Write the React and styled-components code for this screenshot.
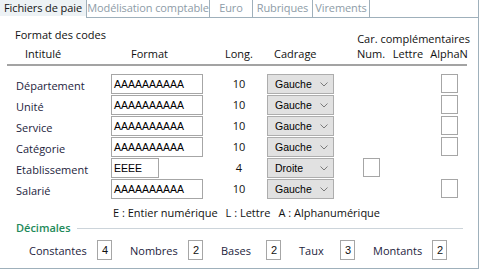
import React from 'react';
import styled, { createGlobalStyle } from 'styled-components';

const GlobalStyle = createGlobalStyle`
  html, body {
    margin: 0;
    padding: 0;
    background: #ffffff;
  }
  body {
    font-family: "Open Sans", "Noto Sans", sans-serif;
    font-size: 11px;
    color: #111;
  }
`;

const Frame = styled.div`
  width: 482px;
  height: 273px;
  overflow: hidden;
  background: #fff;
`;

const TabBar = styled.div`
  display: flex;
  height: 18px;
  width: 479px;
`;

const Tab = styled.div`
  box-sizing: border-box;
  width: ${({ width }) => width}px;
  height: 18px;
  line-height: 16px;
  text-align: center;
  white-space: nowrap;
  letter-spacing: -0.1px;
  background: ${({ active }) => (active ? '#edf2f5' : '#fff')};
  color: ${({ active }) => (active ? '#141414' : '#8e9ca7')};
  border-bottom: ${({ active }) => (active ? '2px solid #fff' : '1px solid #9fb0bb')};
  border-right: ${({ active }) => (active ? 'none' : '1px solid #9fb0bb')};
  border-left: ${({ first }) => (first ? '1px solid #9fb0bb' : 'none')};
`;

const TabFill = styled.div`
  flex: 1;
  border-bottom: 1px solid #9fb0bb;
  border-right: 1px solid #9fb0bb;
  box-sizing: border-box;
`;

const Panel = styled.div`
  box-sizing: border-box;
  width: 479px;
  height: 251px;
  padding-top: 9px;
  border-right: 1px solid #9fb0bb;
  border-bottom: 1px solid #9fb0bb;
`;

const CodeGrid = styled.div`
  display: grid;
  grid-template-columns: 95px 100px 56px 67px 18px 38px 36px 46px;
  margin-left: 16px;
  line-height: 15px;
`;

const SectionTitle = styled.div`
  grid-column: 1 / 4;
  height: 19px;
  margin-left: -1px;
  color: #111;
`;

const ExtraTitle = styled.div`
  grid-column: 6 / 9;
  align-self: end;
  text-align: right;
  padding-right: 2px;
  white-space: nowrap;
`;

const ColHead = styled.div`
  grid-column: ${({ col }) => col};
  text-align: ${({ center }) => (center ? 'center' : 'left')};
  padding-left: ${({ indent }) => indent || 0}px;
  white-space: nowrap;
`;

const Rule = styled.div`
  height: 2px;
  background: #a3a3a3;
  margin: 3px 11px 8px 7px;
`;

const Rows = styled(CodeGrid)`
  grid-auto-rows: 21px;
`;

const RowLabel = styled.div`
  grid-column: 1;
  padding-top: 4px;
  color: #1d1d3d;
  white-space: nowrap;
`;

const CodeInput = styled.div`
  grid-column: 2;
  box-sizing: border-box;
  width: ${({ width }) => width}px;
  height: 20px;
  border: 1px solid #a6a6a6;
  padding-left: 2px;
  font-family: "Liberation Sans", Arial, sans-serif;
  font-size: 10.5px;
  line-height: 18px;
  color: #000;
`;

const Length = styled.div`
  grid-column: 3;
  text-align: center;
  line-height: 20px;
  color: #111;
`;

const Select = styled.div`
  grid-column: 4;
  box-sizing: border-box;
  height: 20px;
  display: flex;
  align-items: center;
  justify-content: space-between;
  padding: 0 5px 0 7px;
  background: #e1e1e1;
  border: 1px solid #adadad;
  font-family: "Liberation Sans", Arial, sans-serif;
  font-size: 10.5px;
  color: #000;
`;

const Check = styled.div`
  grid-column: ${({ col }) => col};
  justify-self: center;
  box-sizing: border-box;
  width: 17px;
  height: 19px;
  border: 1px solid #a6a6a6;
  background: #fff;
`;

const Legend = styled.div`
  display: flex;
  gap: 8px;
  padding-left: 113px;
  margin-top: 5px;
  line-height: 15px;
  color: #111;
`;

const GroupHead = styled.div`
  display: flex;
  align-items: center;
  gap: 6px;
  margin: 0 15px 0 16px;
  height: 15px;
  color: #1e8a5a;
  font-weight: 600;
`;

const GroupLine = styled.div`
  flex: 1;
  height: 1px;
  background: #ccd4da;
  margin-top: 1px;
`;

const DecimalRow = styled.div`
  display: flex;
  align-items: center;
  gap: 18px;
  padding-left: 29px;
  margin-top: 5px;
`;

const Field = styled.div`
  display: flex;
  align-items: center;
`;

const FieldLabel = styled.span`
  width: ${({ width }) => width}px;
  color: #1d1d3d;
  white-space: nowrap;
`;

const DigitBox = styled.div`
  box-sizing: border-box;
  width: 15px;
  height: 20px;
  border: 1px solid #a6a6a6;
  text-align: right;
  padding-right: 3px;
  line-height: 18px;
  font-family: "Liberation Sans", Arial, sans-serif;
  font-size: 11px;
  color: #111;
`;

const Chevron = () => (
  <svg width="8" height="5" viewBox="0 0 8 5">
    <path d="M0.5 0.5 L4 4 L7.5 0.5" fill="none" stroke="#7a7a7a" strokeWidth="1" />
  </svg>
);

const tabs = [
  { label: 'Fichiers de paie', width: 86, active: true },
  { label: 'Modélisation comptable', width: 124, first: true },
  { label: 'Euro', width: 43 },
  { label: 'Rubriques', width: 60 },
  { label: 'Virements', width: 57 },
];

const codes = [
  { label: 'Département', format: 'AAAAAAAAAA', len: 10, align: 'Gauche', alpha: true },
  { label: 'Unité', format: 'AAAAAAAAAA', len: 10, align: 'Gauche', alpha: true },
  { label: 'Service', format: 'AAAAAAAAAA', len: 10, align: 'Gauche', alpha: true },
  { label: 'Catégorie', format: 'AAAAAAAAAA', len: 10, align: 'Gauche', alpha: true },
  { label: 'Etablissement', format: 'EEEE', len: 4, align: 'Droite', num: true, short: true },
  { label: 'Salarié', format: 'AAAAAAAAAA', len: 10, align: 'Gauche', alpha: true },
];

const decimals = [
  { label: 'Constantes', value: 4, width: 68 },
  { label: 'Nombres', value: 2, width: 58 },
  { label: 'Bases', value: 2, width: 45 },
  { label: 'Taux', value: 3, width: 41 },
  { label: 'Montants', value: 2, width: 59 },
];

const App = () => (
  <Frame>
    <GlobalStyle />
    <TabBar>
      {tabs.map((t) => (
        <Tab key={t.label} width={t.width} active={t.active} first={t.first}>
          {t.label}
        </Tab>
      ))}
      <TabFill />
    </TabBar>
    <Panel>
      <CodeGrid>
        <SectionTitle>Format des codes</SectionTitle>
        <ExtraTitle>Car. complémentaires</ExtraTitle>
        <ColHead col={1} indent={9}>Intitulé</ColHead>
        <ColHead col={2} indent={20}>Format</ColHead>
        <ColHead col={3} center>Long.</ColHead>
        <ColHead col={4} indent={7}>Cadrage</ColHead>
        <ColHead col={6} center>Num.</ColHead>
        <ColHead col={7} center>Lettre</ColHead>
        <ColHead col={8} center>AlphaN</ColHead>
      </CodeGrid>
      <Rule />
      <Rows>
        {codes.map((c) => (
          <React.Fragment key={c.label}>
            <RowLabel>{c.label}</RowLabel>
            <CodeInput width={c.short ? 48 : 92}>{c.format}</CodeInput>
            <Length>{c.len}</Length>
            <Select>
              <span>{c.align}</span>
              <Chevron />
            </Select>
            {c.num && <Check col={6} />}
            {c.alpha && <Check col={8} />}
          </React.Fragment>
        ))}
      </Rows>
      <Legend>
        <span>E : Entier numérique</span>
        <span>L : Lettre</span>
        <span>A : Alphanumérique</span>
      </Legend>
      <GroupHead>
        Décimales
        <GroupLine />
      </GroupHead>
      <DecimalRow>
        {decimals.map((d) => (
          <Field key={d.label}>
            <FieldLabel width={d.width}>{d.label}</FieldLabel>
            <DigitBox>{d.value}</DigitBox>
          </Field>
        ))}
      </DecimalRow>
    </Panel>
  </Frame>
);

export default App;
